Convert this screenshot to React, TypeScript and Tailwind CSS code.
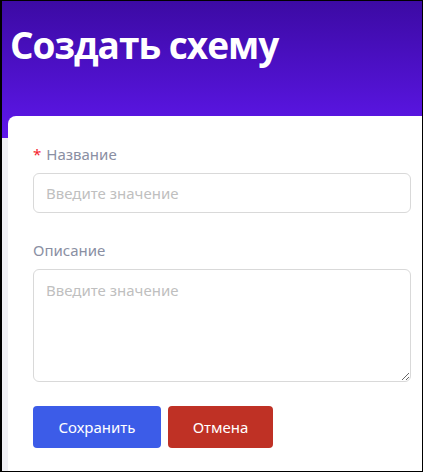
import React from "react";

export default function App() {
  return (
    <div className="w-[423px] h-[472px] overflow-hidden bg-[#f0f0f5] border-t border-r border-b border-l-2 border-black" style={{ fontFamily: '"Noto Sans", sans-serif' }}>
      <div className="h-[137px] bg-linear-to-b from-[#3c0aa4] to-[#5e17eb] pl-[8px] pt-[16px]">
        <h1 className="text-white font-bold text-[37px] leading-[56px] tracking-[-1px]" style={{ fontFamily: '"Open Sans", sans-serif' }}>Создать схему</h1>
      </div>
      <div className="-mt-[22px] ml-[6px] h-[400px] bg-white rounded-tl-lg pl-[25px] pr-[11px] pt-[27px]">
        <label className="flex items-center h-[22px] text-[15px] text-[#8a8fa3]">
          <span className="text-[#f5222d] mr-[5px] text-[15px]">*</span>Название
        </label>
        <input
          className="mt-[8px] block w-full h-[40px] rounded-[6px] border border-[#d9d9d9] px-[12px] text-[15px] placeholder:text-[#bfbfbf] outline-none"
          placeholder="Введите значение"
        />
        <label className="mt-[26px] flex items-center h-[22px] text-[15px] text-[#8a8fa3]">Описание</label>
        <textarea
          className="mt-[8px] block w-full h-[113px] rounded-[6px] border border-[#d9d9d9] px-[12px] py-[9px] text-[15px] placeholder:text-[#bfbfbf] outline-none resize-y"
          placeholder="Введите значение"
        />
        <div className="mt-[24px] flex gap-[7px]">
          <button className="w-[128px] h-[42px] rounded-[4px] bg-[#3c5ce8] text-white text-[15px]">Сохранить</button>
          <button className="w-[105px] h-[42px] rounded-[4px] bg-[#bf3125] text-white text-[15px]">Отмена</button>
        </div>
      </div>
    </div>
  );
}
